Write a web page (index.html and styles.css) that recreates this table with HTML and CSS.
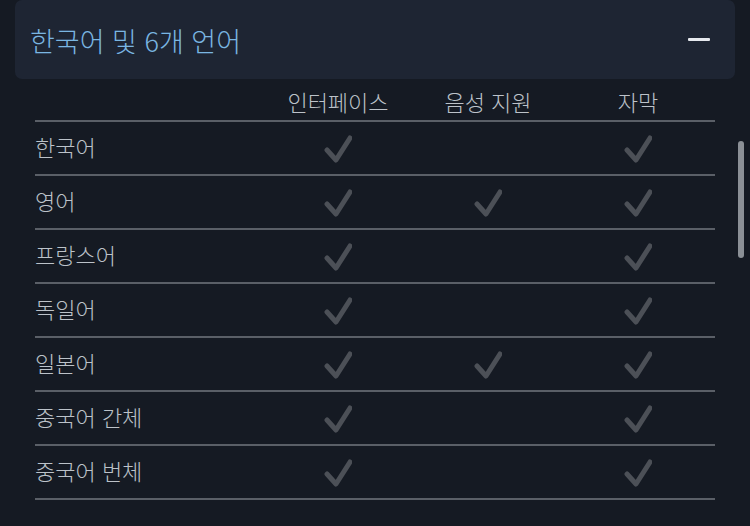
FILE: index.html
```html
<!DOCTYPE html>
<html lang="ko">
<head>
<meta charset="utf-8">
<link rel="stylesheet" href="styles.css">
</head>
<body>
<div class="page">
  <div class="card">
    <span class="title">한국어 및 6개 언어</span>
    <span class="minus"></span>
  </div>
  <div class="table">
    <div class="row head">
      <span class="lang"></span>
      <span class="col">인터페이스</span>
      <span class="col">음성 지원</span>
      <span class="col">자막</span>
    </div>
    <div class="row">
      <span class="lang">한국어</span>
      <span class="col"><svg class="chk" viewBox="0 0 28 28"><path d="M3 15 L12 25 L26 3"/></svg></span>
      <span class="col"></span>
      <span class="col"><svg class="chk" viewBox="0 0 28 28"><path d="M3 15 L12 25 L26 3"/></svg></span>
    </div>
    <div class="row">
      <span class="lang">영어</span>
      <span class="col"><svg class="chk" viewBox="0 0 28 28"><path d="M3 15 L12 25 L26 3"/></svg></span>
      <span class="col"><svg class="chk" viewBox="0 0 28 28"><path d="M3 15 L12 25 L26 3"/></svg></span>
      <span class="col"><svg class="chk" viewBox="0 0 28 28"><path d="M3 15 L12 25 L26 3"/></svg></span>
    </div>
    <div class="row">
      <span class="lang">프랑스어</span>
      <span class="col"><svg class="chk" viewBox="0 0 28 28"><path d="M3 15 L12 25 L26 3"/></svg></span>
      <span class="col"></span>
      <span class="col"><svg class="chk" viewBox="0 0 28 28"><path d="M3 15 L12 25 L26 3"/></svg></span>
    </div>
    <div class="row">
      <span class="lang">독일어</span>
      <span class="col"><svg class="chk" viewBox="0 0 28 28"><path d="M3 15 L12 25 L26 3"/></svg></span>
      <span class="col"></span>
      <span class="col"><svg class="chk" viewBox="0 0 28 28"><path d="M3 15 L12 25 L26 3"/></svg></span>
    </div>
    <div class="row">
      <span class="lang">일본어</span>
      <span class="col"><svg class="chk" viewBox="0 0 28 28"><path d="M3 15 L12 25 L26 3"/></svg></span>
      <span class="col"><svg class="chk" viewBox="0 0 28 28"><path d="M3 15 L12 25 L26 3"/></svg></span>
      <span class="col"><svg class="chk" viewBox="0 0 28 28"><path d="M3 15 L12 25 L26 3"/></svg></span>
    </div>
    <div class="row">
      <span class="lang">중국어 간체</span>
      <span class="col"><svg class="chk" viewBox="0 0 28 28"><path d="M3 15 L12 25 L26 3"/></svg></span>
      <span class="col"></span>
      <span class="col"><svg class="chk" viewBox="0 0 28 28"><path d="M3 15 L12 25 L26 3"/></svg></span>
    </div>
    <div class="row">
      <span class="lang">중국어 번체</span>
      <span class="col"><svg class="chk" viewBox="0 0 28 28"><path d="M3 15 L12 25 L26 3"/></svg></span>
      <span class="col"></span>
      <span class="col"><svg class="chk" viewBox="0 0 28 28"><path d="M3 15 L12 25 L26 3"/></svg></span>
    </div>
  </div>
  <div class="scrollbar"></div>
</div>
</body>
</html>
```

FILE: styles.css
```css
* { box-sizing: border-box; }
html, body {
  margin: 0;
  padding: 0;
  background: #151a23;
  width: 750px;
  height: 526px;
  overflow: hidden;
}
.page {
  position: relative;
  width: 750px;
  height: 526px;
  padding: 0 15px;
  font-family: "Noto Sans CJK KR", "Noto Sans", sans-serif;
  font-weight: 300;
}
.card {
  height: 79px;
  background: #1e2533;
  border-radius: 7px;
  display: flex;
  align-items: center;
  justify-content: space-between;
  padding: 0 25px 0 15px;
}
.title {
  font-size: 27px;
  color: #7ab6e2;
  line-height: 1;
  margin-top: 1px;
}
.minus {
  width: 22px;
  height: 3px;
  background: #e6e9ee;
  border-radius: 1px;
}
.table {
  margin: 0 20px;
}
.row {
  display: grid;
  grid-template-columns: 228px 150px 150px 150px;
  align-items: center;
  height: 54px;
  border-bottom: 2px solid #5a5f67;
}
.row.head {
  height: 43px;
  padding-bottom: 8px;
  align-items: end;
}
.lang {
  font-size: 22px;
  color: #bcc2c9;
  line-height: 1;
  padding-bottom: 5px;
}
.col {
  display: flex;
  justify-content: center;
  font-size: 22px;
  color: #bcc2c9;
  line-height: 1;
}
.chk {
  width: 28px;
  height: 28px;
  fill: none;
  stroke: #4c5057;
  stroke-width: 5;
  stroke-linecap: round;
  stroke-linejoin: round;
  margin-top: 2px;
}
.scrollbar {
  position: absolute;
  left: 738px;
  top: 141px;
  width: 6px;
  height: 117px;
  border-radius: 3px;
  background: #8b9096;
}
```
